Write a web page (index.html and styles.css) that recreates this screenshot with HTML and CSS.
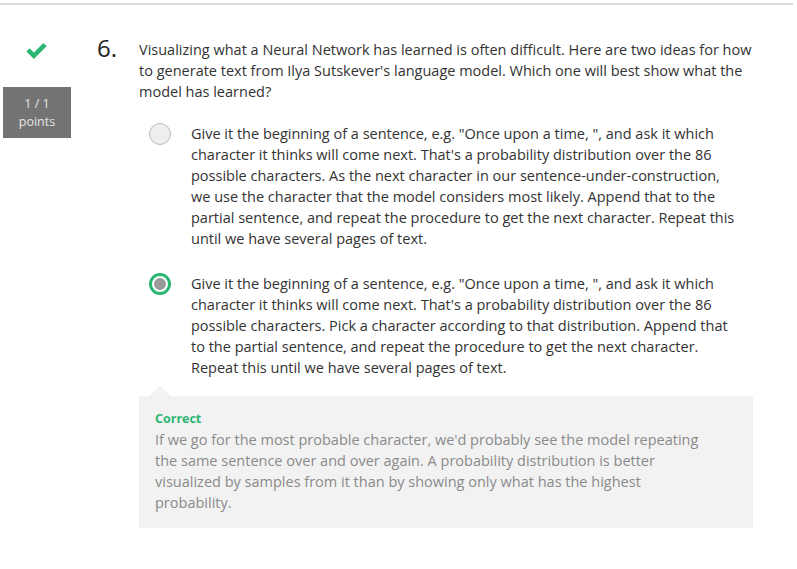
FILE: index.html
```html
<!DOCTYPE html>
<html lang="en">
<head>
<meta charset="utf-8">
<title>Question 6</title>
<link rel="stylesheet" href="styles.css">
</head>
<body>
<div class="topbar"></div>
<div class="question">
  <div class="status">
    <svg class="check" viewBox="0 0 21.5 17" width="23" height="16" aria-hidden="true">
      <polygon points="0,9 3.5,5.5 8,10 18,0 21.5,3.5 8,17" fill="#2bb673"/>
    </svg>
    <div class="score">
      <div>1 / 1</div>
      <div>points</div>
    </div>
  </div>
  <div class="number">6.</div>
  <div class="body">
    <p class="prompt">Visualizing what a Neural Network has learned is often difficult. Here are two ideas for how to generate text from Ilya Sutskever's language model. Which one will best show what the model has learned?</p>
    <div class="options">
      <div class="option">
        <span class="radio"></span>
        <span class="opt-text">Give it the beginning of a sentence, e.g. "Once upon a time, ", and ask it which character it thinks will come next. That's a probability distribution over the 86 possible characters. As the next character in our sentence-under-construction, we use the character that the model considers most likely. Append that to the partial sentence, and repeat the procedure to get the next character. Repeat this until we have several pages of text.</span>
      </div>
      <div class="option">
        <span class="radio selected"><span class="dot"></span></span>
        <span class="opt-text">Give it the beginning of a sentence, e.g. "Once upon a time, ", and ask it which character it thinks will come next. That's a probability distribution over the 86 possible characters. Pick a character according to that distribution. Append that to the partial sentence, and repeat the procedure to get the next character. Repeat this until we have several pages of text.</span>
      </div>
    </div>
    <div class="feedback">
      <div class="verdict">Correct</div>
      <p class="explain">If we go for the most probable character, we'd probably see the model repeating the same sentence over and over again. A probability distribution is better visualized by samples from it than by showing only what has the highest probability.</p>
    </div>
  </div>
</div>
</body>
</html>
```

FILE: styles.css
```css
* { box-sizing: border-box; }
html, body { margin: 0; padding: 0; background: #fff; }
body {
  font-family: "Open Sans", "DejaVu Sans", sans-serif;
  font-size: 14.5px;
  line-height: 21px;
  color: #333;
}
.topbar {
  height: 2px;
  background: #dcdcdc;
  margin: 3px 4px 0 0;
}
.question {
  display: flex;
  align-items: flex-start;
  padding-top: 34px;
}
.status {
  width: 74px;
  flex: none;
}
.check {
  display: block;
  margin: 4px 0 0 25px;
}
.score {
  margin: 28px 0 0 3px;
  width: 68px;
  height: 51px;
  background: #737373;
  color: #e4e4e4;
  font-size: 12.5px;
  line-height: 18px;
  text-align: center;
  padding-top: 8px;
}
.number {
  width: 65px;
  flex: none;
  padding-left: 23px;
  font-size: 24px;
  line-height: 24px;
  color: #222;
  margin-top: -3px;
}
.body {
  width: 614px;
  flex: none;
}
.prompt { margin: 0; }
.options {
  margin-top: 21px;
  display: flex;
  flex-direction: column;
  gap: 24px;
}
.option {
  display: flex;
  align-items: flex-start;
}
.radio {
  flex: none;
  width: 22px;
  height: 22px;
  margin: 0 20px 0 10px;
  border-radius: 50%;
  border: 1px solid #bdbdbd;
  background: #eeeeee;
  display: flex;
  align-items: center;
  justify-content: center;
}
.radio.selected {
  border: 3px solid #2bb673;
  background: #fff;
}
.dot {
  width: 12px;
  height: 12px;
  border-radius: 50%;
  background: #9a9a9a;
}
.opt-text {
  width: 549px;
}
.feedback {
  position: relative;
  margin-top: 18px;
  background: #f2f2f2;
  padding: 12px 16px 15px;
}
.feedback::before {
  content: "";
  position: absolute;
  top: -10px;
  left: 10px;
  border-left: 11px solid transparent;
  border-right: 11px solid transparent;
  border-bottom: 10px solid #f2f2f2;
}
.verdict {
  font-size: 12.5px;
  font-weight: 700;
  color: #2bb673;
}
.explain {
  margin: 0;
  max-width: 556px;
  color: #8a8a8a;
}
```
